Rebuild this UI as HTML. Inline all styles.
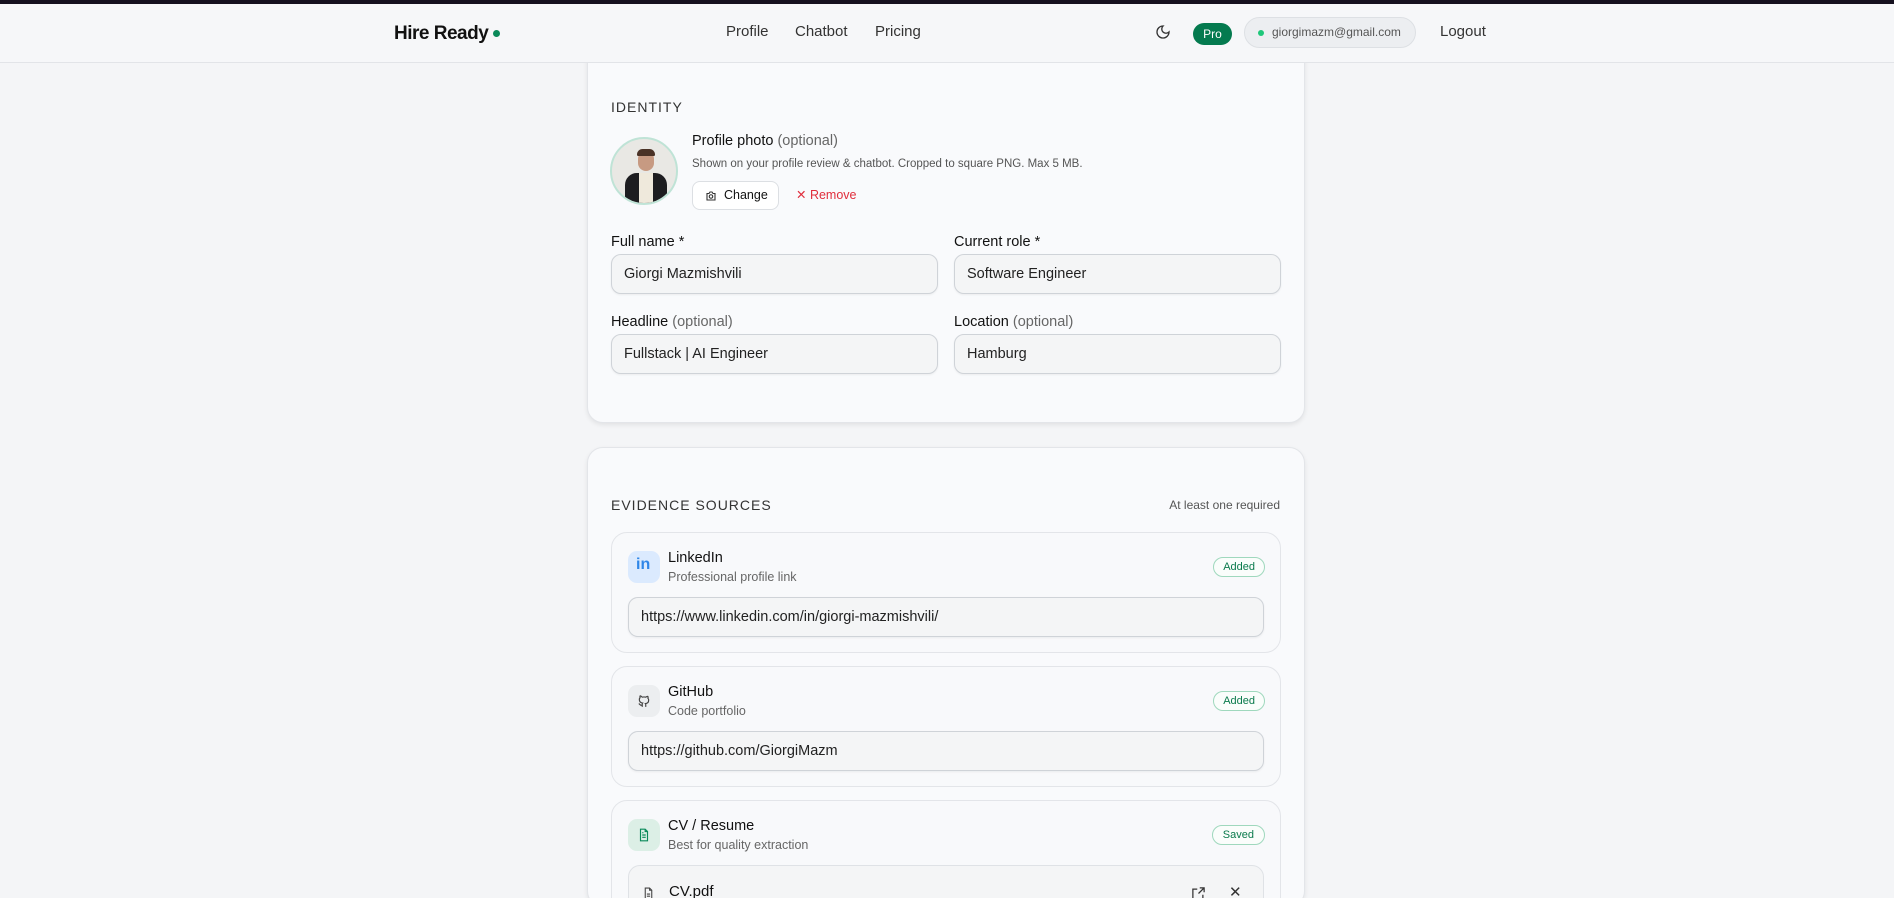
<!DOCTYPE html>
<html><head><meta charset="utf-8">
<style>
*{box-sizing:border-box;margin:0;padding:0}
html{width:1894px;height:898px;overflow:hidden}
body{width:1894px;height:898px;overflow:hidden;background:#f4f5f7;font-family:"Liberation Sans",sans-serif;color:#111;position:relative}
.topbar{position:absolute;left:0;top:0;width:1894px;height:4px;background:#15101f;z-index:6}
nav{position:absolute;left:0;top:4px;width:1894px;height:59px;background:#f6f7f9;border-bottom:1px solid #e2e4e8;z-index:5}
.abs{position:absolute}
.logo{left:394px;top:19px;font-size:19px;font-weight:bold;letter-spacing:-0.5px}
.dot{display:inline-block;width:7px;height:7px;border-radius:50%;background:#0a8a5a;margin-left:5px;vertical-align:2px}
.nl{top:19px;font-size:15px;color:#333}
.pro{left:1193px;top:19px;width:39px;height:22px;border-radius:11px;background:#047a4f;color:#fff;font-size:12px;text-align:center;line-height:22px}
.mail{left:1244px;top:13px;width:172px;height:31px;border-radius:16px;background:#eceef1;border:1px solid #dde0e4;font-size:12px;color:#555;line-height:29px;padding-left:27px}
.mail:before{content:"";position:absolute;left:13px;top:12px;width:6px;height:6px;border-radius:50%;background:#1ec77a}
.card{position:absolute;left:587px;width:718px;background:#f9fafc;border:1px solid #e3e5e9;border-radius:16px;box-shadow:0 2px 5px rgba(0,0,0,.08)}
.h{font-size:14px;letter-spacing:1px;color:#333;position:absolute}
.lab{position:absolute;font-size:14.5px;color:#111}
.lab span{color:#666}
.inp{position:absolute;height:40px;border:1px solid #cfd3d8;border-radius:10px;background:#f4f5f6;font-size:14.5px;line-height:38px;padding-left:12px;color:#222;box-shadow:0 1px 2px rgba(0,0,0,.06)}
.src{position:absolute;left:23px;width:670px;border:1px solid #e3e5e9;border-radius:16px;background:#f8f9fb}
.ic{position:absolute;left:16px;top:18px;width:32px;height:32px;border-radius:9px}
.t{position:absolute;left:56px;top:17px;font-size:14.5px}
.s{position:absolute;left:56px;top:37px;font-size:12.5px;color:#666}
.badge{position:absolute;right:15px;top:24px;height:20px;border:1px solid #9fd8bd;border-radius:10px;font-size:11px;color:#0a7a4c;line-height:18px;padding:0 9px;background:#fafdfb}
</style></head><body>
<div class="topbar"></div>
<nav>
<div class="abs logo">Hire Ready<span class="dot"></span></div>
<div class="abs nl" style="left:726px">Profile</div>
<div class="abs nl" style="left:795px">Chatbot</div>
<div class="abs nl" style="left:875px">Pricing</div>
<svg class="abs" style="left:1155px;top:20px" width="16" height="16" viewBox="0 0 24 24" fill="none" stroke="#333" stroke-width="2"><path d="M12 3a6 6 0 0 0 9 9 9 9 0 1 1-9-9z"/></svg>
<div class="abs pro">Pro</div>
<div class="abs mail">giorgimazm@gmail.com</div>
<div class="abs nl" style="left:1440px">Logout</div>
</nav>

<div class="card" style="top:20px;height:403px">
<div class="h" style="left:23px;top:78px">IDENTITY</div>
<div style="position:absolute;left:22px;top:116px;width:68px;height:68px;border-radius:50%;border:2px solid #bfe3d6;background:#e9e8e4;overflow:hidden">
 <div style="position:absolute;left:26px;top:12px;width:16px;height:20px;border-radius:8px;background:#c79a82"></div>
 <div style="position:absolute;left:25px;top:10px;width:18px;height:7px;border-radius:8px 8px 2px 2px;background:#4a3226"></div>
 <div style="position:absolute;left:13px;top:34px;width:42px;height:40px;border-radius:12px 12px 0 0;background:#1d1d20"></div>
 <div style="position:absolute;left:27px;top:34px;width:14px;height:40px;background:#efe9dc"></div>
</div>
<div class="lab" style="left:104px;top:112px">Profile photo <span>(optional)</span></div>
<div class="abs" style="left:104px;top:137px;font-size:11.5px;color:#555">Shown on your profile review &amp; chatbot. Cropped to square PNG. Max 5 MB.</div>
<div class="abs" style="left:104px;top:160px;width:87px;height:29px;border:1px solid #dcdfe3;border-radius:8px;background:#fff;font-size:12.5px;line-height:27px;padding-left:31px">
<svg style="position:absolute;left:12px;top:8px" width="12" height="12" viewBox="0 0 24 24" fill="none" stroke="#333" stroke-width="2.2"><path d="M4 7h4l2-3h4l2 3h4v13H4z"/><circle cx="12" cy="13" r="3.5"/></svg>Change</div>
<div class="abs" style="left:208px;top:166px;font-size:12.5px;color:#e02d3c">✕ Remove</div>
<div class="lab" style="left:23px;top:213px">Full name *</div>
<div class="inp" style="left:23px;top:233px;width:327px">Giorgi Mazmishvili</div>
<div class="lab" style="left:366px;top:213px">Current role *</div>
<div class="inp" style="left:366px;top:233px;width:327px">Software Engineer</div>
<div class="lab" style="left:23px;top:293px">Headline <span>(optional)</span></div>
<div class="inp" style="left:23px;top:313px;width:327px">Fullstack | AI Engineer</div>
<div class="lab" style="left:366px;top:293px">Location <span>(optional)</span></div>
<div class="inp" style="left:366px;top:313px;width:327px">Hamburg</div>
</div>
<div style="position:absolute;left:586px;top:4px;width:720px;height:59px;background:#f6f7f9;z-index:4"></div>

<div class="card" style="top:447px;height:460px">
<div class="h" style="left:23px;top:49px">EVIDENCE SOURCES</div>
<div class="abs" style="right:24px;top:50px;font-size:12px;color:#555">At least one required</div>

<div class="src" style="top:84px;height:121px">
 <div class="ic" style="background:#dbeafe"><div style="position:absolute;left:8px;top:5px;color:#2f86e8;font-weight:bold;font-size:16px">in</div></div>
 <div class="t">LinkedIn</div><div class="s">Professional profile link</div>
 <div class="badge">Added</div>
 <div class="inp" style="left:16px;top:64px;width:636px">https://www.linkedin.com/in/giorgi-mazmishvili/</div>
</div>

<div class="src" style="top:218px;height:121px">
 <div class="ic" style="background:#eceef0"><svg style="position:absolute;left:9px;top:9px" width="14" height="14" viewBox="0 0 24 24" fill="none" stroke="#444" stroke-width="2"><path d="M9 19c-4 1.5-4-2-6-2.5M15 22v-3.5c0-1 .1-1.4-.5-2 2.8-.3 5.5-1.4 5.5-6a4.6 4.6 0 0 0-1.3-3.2 4.2 4.2 0 0 0-.1-3.2s-1.1-.3-3.5 1.3a12 12 0 0 0-6.2 0C6.5 2.8 5.4 3.1 5.4 3.1a4.2 4.2 0 0 0-.1 3.2A4.6 4.6 0 0 0 4 9.5c0 4.6 2.7 5.7 5.5 6-.6.6-.6 1.2-.5 2V22"/></svg></div>
 <div class="t">GitHub</div><div class="s">Code portfolio</div>
 <div class="badge">Added</div>
 <div class="inp" style="left:16px;top:64px;width:636px">https://github.com/GiorgiMazm</div>
</div>

<div class="src" style="top:352px;height:140px">
 <div class="ic" style="background:#dcefe6"><svg style="position:absolute;left:9px;top:8px" width="14" height="16" viewBox="0 0 24 24" fill="none" stroke="#0a8a5a" stroke-width="2"><path d="M14 2H6v20h12V6z"/><path d="M14 2v4h4M9 12h6M9 16h6M9 8h2"/></svg></div>
 <div class="t">CV / Resume</div><div class="s">Best for quality extraction</div>
 <div class="badge" style="padding:0 10px">Saved</div>
 <div style="position:absolute;left:16px;top:64px;width:636px;height:70px;border:1px solid #dfe2e6;border-radius:12px;background:#f4f5f6">
  <svg style="position:absolute;left:13px;top:20px" width="13" height="15" viewBox="0 0 24 24" fill="none" stroke="#444" stroke-width="2"><path d="M14 2H6v20h12V6z"/><path d="M14 2v4h4M9 13h6M9 17h6"/></svg>
  <div style="position:absolute;left:40px;top:17px;font-size:15px">CV.pdf</div>
  <svg style="position:absolute;left:562px;top:20px" width="15" height="15" viewBox="0 0 24 24" fill="none" stroke="#333" stroke-width="2"><path d="M14 3h7v7M21 3l-9 9M19 14v7H3V5h7"/></svg>
  <div style="position:absolute;left:600px;top:17px;font-size:15px;color:#333">✕</div>
 </div>
</div>
</div>
</body></html>
